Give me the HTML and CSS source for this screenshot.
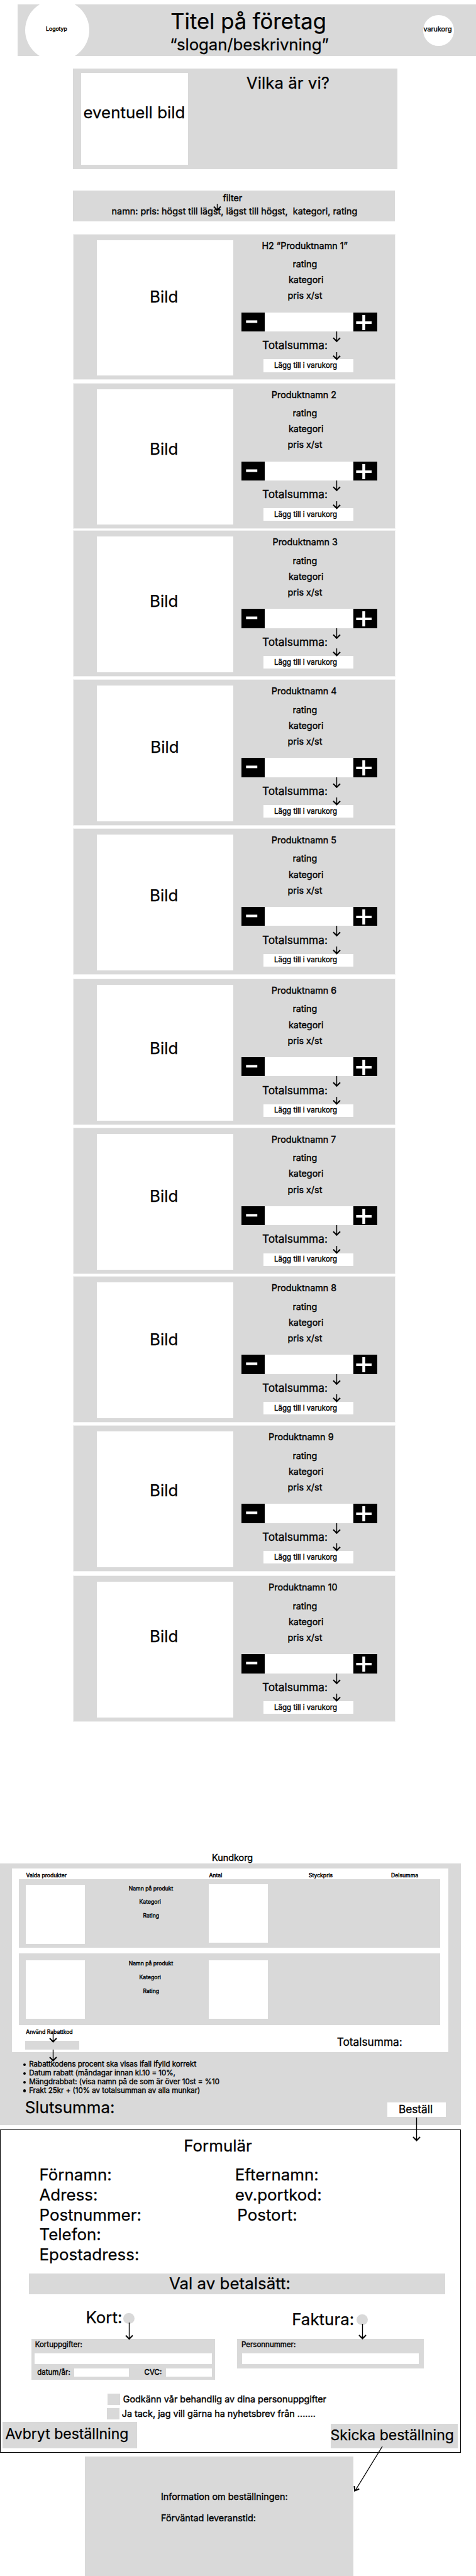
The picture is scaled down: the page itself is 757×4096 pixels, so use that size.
FILE: index.html
```html
<!DOCTYPE html>
<html lang="sv">
<head>
<meta charset="utf-8">
<title>Titel på företag</title>
<link rel="stylesheet" href="styles.css">
</head>
<body>
<header class="top">
  <div class="logo t12">Logotyp</div>
  <div class="brand">
    <h1 class="t48">Titel på företag</h1>
    <p class="slogan t36">“slogan/beskrivning”</p>
  </div>
  <div class="basket t16">varukorg</div>
</header>

<section class="hero">
  <div class="hero-image t36">eventuell bild</div>
  <h2 class="hero-title t36">Vilka är vi?</h2>
</section>

<section class="filter t20">
  <p class="filter-title">filter</p>
  <p class="filter-options">namn: pris: högst till lägst, lägst till högst,&nbsp; kategori, rating</p>
  <svg class="arrow filter-arrow" width="13" height="11"><path d="M6.5 0V10"/><path class="head" d="M1 4.5L6.5 10L12 4.5"/></svg>
</section>

<main class="products" id="products"></main>

<h2 class="cart-title t20">Kundkorg</h2>
<section class="cart">
  <div class="cart-inner">
    <div class="cart-head t12">
      <span class="col-name">Valda produkter</span><span class="col-qty">Antal</span><span class="col-price">Styckpris</span><span>Delsumma</span>
    </div>
    <div class="cart-row">
      <div class="thumb"></div>
      <div class="meta t12"><p>Namn på produkt</p><p class="meta-cat">Kategori</p><p class="meta-rating">Rating</p></div>
      <div class="qty"></div>
    </div>
    <div class="cart-row second">
      <div class="thumb"></div>
      <div class="meta t12"><p>Namn på produkt</p><p class="meta-cat">Kategori</p><p class="meta-rating">Rating</p></div>
      <div class="qty"></div>
    </div>
    <div class="cart-foot">
      <div class="discount">
        <p class="t12">Använd Rabattkod</p>
        <div class="code"></div>
        <svg class="arrow code-arrow" width="13" height="14"><path d="M6.5 0V12.5"/><path class="head" d="M1 7L6.5 12.5L12 7"/></svg>
        <svg class="arrow code-arrow-out" width="13" height="20"><path d="M6.5 0V18"/><path class="head" d="M1 12L6.5 17.5L12 12"/></svg>
      </div>
      <p class="cart-total t24">Totalsumma:</p>
    </div>
  </div>
  <ul class="notes t16">
    <li>Rabattkodens procent ska visas ifall ifylld korrekt</li>
    <li>Datum rabatt (måndagar innan kl.10 = 10%,</li>
    <li>Mängdrabbat: (visa namn på de som är över 10st = %10</li>
    <li>Frakt 25kr + (10% av totalsumman av alla munkar)</li>
  </ul>
  <div class="checkout">
    <p class="t36">Slutsumma:</p>
    <div class="order t24">Beställ
      <svg class="arrow order-arrow" width="13" height="38"><path d="M6.5 0V36.5"/><path class="head" d="M1 31L6.5 36.5L12 31"/></svg>
    </div>
  </div>
</section>

<section class="form">
  <h2 class="form-title t36">Formulär</h2>
  <div class="fields t36">
    <div class="fields-left"><p>Förnamn:</p><p>Adress:</p><p>Postnummer:</p><p>Telefon:</p><p>Epostadress:</p></div>
    <div><p>Efternamn:</p><p>ev.portkod:</p><p class="city">Postort:</p></div>
  </div>
  <h3 class="pay-title t36">Val av betalsätt:</h3>
  <div class="pay">
    <div class="pay-card">
      <div class="choice t36"><span>Kort:</span><i class="radio"></i></div>
      <svg class="arrow card-arrow" width="13" height="28"><path d="M6.5 0V26"/><path class="head" d="M1 20.5L6.5 26L12 20.5"/></svg>
      <div class="panel t16">
        <p class="panel-label">Kortuppgifter:</p>
        <div class="input card-number"></div>
        <div class="pair"><span>datum/år:</span><div class="input date"></div><span class="cvc-label">CVC:</span><div class="input cvc"></div></div>
      </div>
    </div>
    <div class="pay-invoice">
      <div class="choice t36"><span>Faktura:</span><i class="radio"></i></div>
      <svg class="arrow invoice-arrow" width="13" height="26"><path d="M6.5 0V24"/><path class="head" d="M1 18L6.5 23.5L12 18"/></svg>
      <div class="panel t16">
        <p class="panel-label">Personnummer:</p>
        <div class="input person"></div>
      </div>
    </div>
  </div>
  <div class="check t20"><i></i><span>Godkänn vår behandlig av dina personuppgifter</span></div>
  <div class="check check-news t20"><i></i><span>Ja tack, jag vill gärna ha nyhetsbrev från .......</span></div>
  <div class="actions t32">
    <div class="cancel">Avbryt beställning</div>
    <div class="send">Skicka beställning
      <svg class="arrow send-arrow" width="52" height="76"><path d="M47 1L4 71"/><path class="head" d="M2.5 64L3.2 71.5L10.3 68.5"/></svg>
    </div>
  </div>
</section>

<section class="confirm t20">
  <p>Information om beställningen:</p>
  <p class="delivery">Förväntad leveranstid:</p>
</section>
<script src="products.js"></script>
</body>
</html>
```
FILE: styles.css
```css
* { box-sizing: border-box; margin: 0; padding: 0; }
body { width: 757px; height: 4096px; overflow: hidden; display: flow-root; background: #fff; color: #000; font-family: Inter, "Liberation Sans", sans-serif; font-weight: 400; line-height: 1.21; white-space: nowrap; }
h1, h2, h3 { font-weight: 400; }

/* type scale */
.t48 { font-size: 34.55px; line-height: 41.6px; }
.t36 { font-size: 25.91px; line-height: 31.2px; }
.t32 { font-size: 23.03px; line-height: 27.8px; }
.t24 { font-size: 17.27px; line-height: 20.8px; }
.t20 { font-size: 14.39px; line-height: 17.35px; }
.t16 { font-size: 11.52px; line-height: 13.9px; }
.t12 { font-size: 8.64px; line-height: 10.4px; }
.t48, .t36, .t32 { -webkit-text-stroke: 0.25px #000; }
.t24 { -webkit-text-stroke: 0.3px #000; }
.t20, .t16, .t12 { -webkit-text-stroke: 0.4px #000; }

.arrow { position: absolute; overflow: visible; fill: none; stroke: #000; stroke-width: 1.4; }
.arrow .head { stroke-width: 2; }

/* header */
.top { display: flex; align-items: flex-start; height: 82px; margin: 7.2px 0 0 28px; background: #d9d9d9; }
.logo { width: 102px; height: 98px; margin: -8px 0 0 12.1px; padding: 42px 0 0 33px; border-radius: 50%; background: #fff; }
.brand { width: 404px; margin-left: 129.2px; padding-top: 5.8px; }
.slogan { margin-left: -1px; letter-spacing: -0.15px; }
.basket { width: 48.8px; height: 48.6px; margin: 17px 0 0 -1.8px; padding-top: 15.4px; border-radius: 50%; background: #fff; font-size: 10.75px; }

/* hero */
.hero { display: flex; width: 516px; height: 160.5px; margin: 19.5px 0 0 116.4px; padding: 7.2px 0 0 13px; background: #d9d9d9; }
.hero-image { width: 169.4px; height: 146.1px; padding: 47.4px 0 0 3px; background: #fff; }
.hero-title { margin-left: 93px; }

/* filter */
.filter { position: relative; width: 511.7px; height: 49px; margin: 33.8px 0 0 116.4px; padding-top: 3.4px; background: #d9d9d9; }
.filter-title { margin-left: 238px; }
.filter-options { margin: 3.5px 0 0 61.2px; }
.filter-arrow { left: 222.8px; top: 20.9px; }

/* products */
.products { width: 511.2px; margin: 20.7px 0 0 116.8px; }
.product { display: flex; height: 230.8px; background: #d9d9d9; box-shadow: 0 0 0 1px #f2f2f2; }
.picture { width: 216.3px; height: 215.8px; margin: 9px 0 0 37.7px; padding-left: 83.6px; background: #fff; }
.info { position: relative; width: 229px; padding-top: 9px; }
.rating { margin: 11.9px 0 0 94.6px; }
.category { margin: 7.8px 0 0 88.2px; }
.price { margin: 8px 0 0 86.7px; }
.stepper { display: flex; width: 215.3px; height: 30.4px; margin: 17.9px 0 0 13.5px; background: #fff; }
.step { width: 36.7px; background: #000; fill: #fff; }
.step.plus { width: 37.6px; margin-left: 141px; }
.total { margin: 12.1px 0 0 46.1px; }
.add { width: 142.5px; height: 20.2px; margin: 11.5px 0 0 48.7px; padding: 3.5px 0 0 16.6px; background: #fff; }
.to-total { left: 158.6px; top: 154.3px; }
.to-add { left: 158.6px; top: 187px; }

/* cart */
.cart-title { margin: 207.7px 0 0 337px; }
.cart { width: 733.3px; height: 416px; margin-top: 0.7px; padding: 7.9px 0 0 18.8px; background: #d9d9d9; }
.cart-inner { width: 693.8px; height: 292.3px; background: #fff; }
.cart-head { display: flex; height: 17.3px; padding: 5.9px 0 0 22.6px; }
.col-name { width: 291px; }
.col-qty { width: 158.6px; }
.col-price { width: 131.1px; }
.cart-row { display: flex; align-items: flex-start; width: 669.6px; height: 109.4px; margin-left: 11.6px; background: #d9d9d9; }
.thumb, .qty { width: 93.5px; height: 93.5px; background: #fff; }
.thumb { margin: 9.4px 0 0 11.1px; }
.qty { margin-top: 7.9px; }
.meta { display: flex; flex-direction: column; gap: 11.3px; width: 197.5px; padding: 9.7px 0 0 69.8px; }
.meta-cat { margin-left: 16.8px; }
.meta-rating { margin-left: 22.6px; }
.second { height: 113.7px; margin-top: 8.7px; }
.second .thumb, .second .qty { margin-top: 10.7px; }
.second .meta { padding-top: 11.1px; }
.cart-foot { display: flex; }
.discount { position: relative; width: 495px; padding: 6.1px 0 0 22.5px; }
.code { width: 86.4px; height: 13.6px; margin: 8.7px 0 0 -1.7px; background: #d9d9d9; }
.code-arrow { left: 59.7px; top: 14.4px; }
.code-arrow-out { left: 59.7px; top: 38.8px; }
.cart-total { padding: 17.1px 0 0 21.9px; }
.notes { margin: 13.3px 0 0 17.6px; list-style: none; }
.notes li { display: flex; align-items: center; gap: 5.2px; height: 13.8px; margin-left: 0.2px; }
.notes li::before { content: ""; width: 4.4px; height: 4.4px; border-radius: 50%; background: #000; }
.checkout { display: flex; margin: 3.7px 0 0 20.9px; }
.checkout > p { width: 576.8px; }
.order { position: relative; width: 92.2px; height: 23px; margin-top: 7.8px; padding: 0.5px 0 0 17.4px; background: #fff; }
.order-arrow { left: 39.9px; top: 23.7px; }

/* form */
.form { width: 733.3px; height: 513.4px; margin-top: 7.3px; padding-top: 9.2px; border: 1px solid #000; }
.form-title { margin-left: 291.3px; }
.fields { display: flex; margin: 14.9px 0 0 61.5px; line-height: 31.65px; }
.fields-left { width: 311.2px; }
.city { margin-left: 3.6px; }
.pay-title { width: 662.3px; height: 32.7px; margin: 14.7px 0 0 44.9px; padding-left: 223px; background: #d9d9d9; }
.pay { display: flex; margin: 21.3px 0 0 48.7px; height: 114.5px; }
.pay-card { position: relative; width: 327.3px; }
.pay-invoice { position: relative; }
.choice { display: flex; align-items: flex-start; height: 49.1px; padding-left: 86.7px; }
.choice span { width: 60.1px; }
.radio { width: 17.4px; height: 17.4px; margin-top: 8.2px; border-radius: 50%; background: #d9d9d9; }
.pay-invoice .choice { padding: 2.5px 0 0 87.2px; }
.pay-invoice .choice span { width: 103.1px; }
.pay-invoice .radio { margin-top: 7.6px; }
.card-arrow { left: 149px; top: 23.2px; }
.invoice-arrow { left: 192.9px; top: 25.6px; }
.panel { width: 292.6px; height: 65.4px; padding: 3.2px 0 0 4.9px; background: #d9d9d9; }
.panel-label { margin-left: 1.1px; }
.input { height: 16.5px; background: #fff; }
.card-number { width: 282.4px; margin-top: 6.7px; }
.pair { display: flex; align-items: flex-start; margin: 7.3px 0 0 4.7px; }
.pair .input { height: 13px; }
.date { width: 87.4px; margin-left: 5.8px; }
.pair > span:first-child { width: 52.7px; }
.cvc-label { width: 34.2px; margin-left: 24.4px; }
.cvc { width: 73px; margin-left: 0.2px; }
.pay-invoice .panel { width: 297.4px; height: 47.6px; padding-left: 7.8px; }
.pay-invoice .panel-label { margin-left: -0.8px; }
.person { width: 281.4px; margin-top: 6.7px; }
.check { display: flex; gap: 5px; margin: 21.8px 0 0 170.4px; height: 18.7px; }
.check i { width: 19.3px; background: #d9d9d9; }
.check-news { gap: 4px; margin: 4.2px 0 0 169.4px; }
.actions { display: flex; align-items: flex-end; height: 46px; margin-left: 3.3px; }
.cancel { width: 213.9px; height: 42.5px; padding: 6px 0 0 4.1px; background: #d9d9d9; }
.send { position: relative; width: 201.8px; height: 39.4px; margin-left: 308px; padding-top: 5.1px; text-indent: -0.7px; background: #d9d9d9; }
.send-arrow { left: 34.6px; top: 35.5px; }

/* confirmation */
.confirm { width: 426.8px; height: 190px; margin: 6.2px 0 0 135.2px; padding: 55px 0 0 120.8px; background: #d9d9d9; }
.delivery { margin-top: 16.9px; }
```
FILE: products.js
```js
// title, title offset, picture label offset (top, left), gap above the card
const products = [
  ["H2 “Produktnamn 1”", 45.6, 74.6, 0, 0],
  ["Produktnamn 2", 61, 79.6, 0, 6.1],
  ["Produktnamn 3", 62.7, 86.8, 0, 4.1],
  ["Produktnamn 4", 61, 81.7, 1.2, 6.1],
  ["Produktnamn 5", 61, 81.2, 0, 6],
  ["Produktnamn 6", 61, 85.3, 0, 8.2],
  ["Produktnamn 7", 61, 83.1, 0, 6],
  ["Produktnamn 8", 61, 74.3, 0, 5.6],
  ["Produktnamn 9", 56.3, 78.2, 0, 6.2],
  ["Produktnamn 10", 56.3, 70.7, 0, 8.3]
];

document.getElementById("products").innerHTML = products.map(([title, x, labelTop, labelLeft, gap]) => `
<article class="product" style="margin-top:${gap}px">
  <div class="picture t36"><p style="padding:${labelTop}px 0 0 ${labelLeft}px">Bild</p></div>
  <div class="info t20">
    <h2 class="t20" style="margin-left:${x}px">${title}</h2>
    <p class="rating">rating</p>
    <p class="category">kategori</p>
    <p class="price">pris x/st</p>
    <div class="stepper">
      <svg class="step"><rect x="7.3" y="12.4" width="17.9" height="4"/></svg>
      <svg class="step plus"><rect x="4.4" y="14" width="24.6" height="4"/><rect x="14.2" y="4" width="4.6" height="24"/></svg>
    </div>
    <p class="total t24">Totalsumma:</p>
    <div class="add t16">Lägg till i varukorg</div>
    <svg class="arrow to-total" width="13" height="18"><path d="M6.5 0V16"/><path class="head" d="M1 10.3L6.5 15.8L12 10.3"/></svg>
    <svg class="arrow to-add" width="13" height="13"><path d="M6.5 0V11.5"/><path class="head" d="M1 5.8L6.5 11.3L12 5.8"/></svg>
  </div>
</article>`).join("");
```
